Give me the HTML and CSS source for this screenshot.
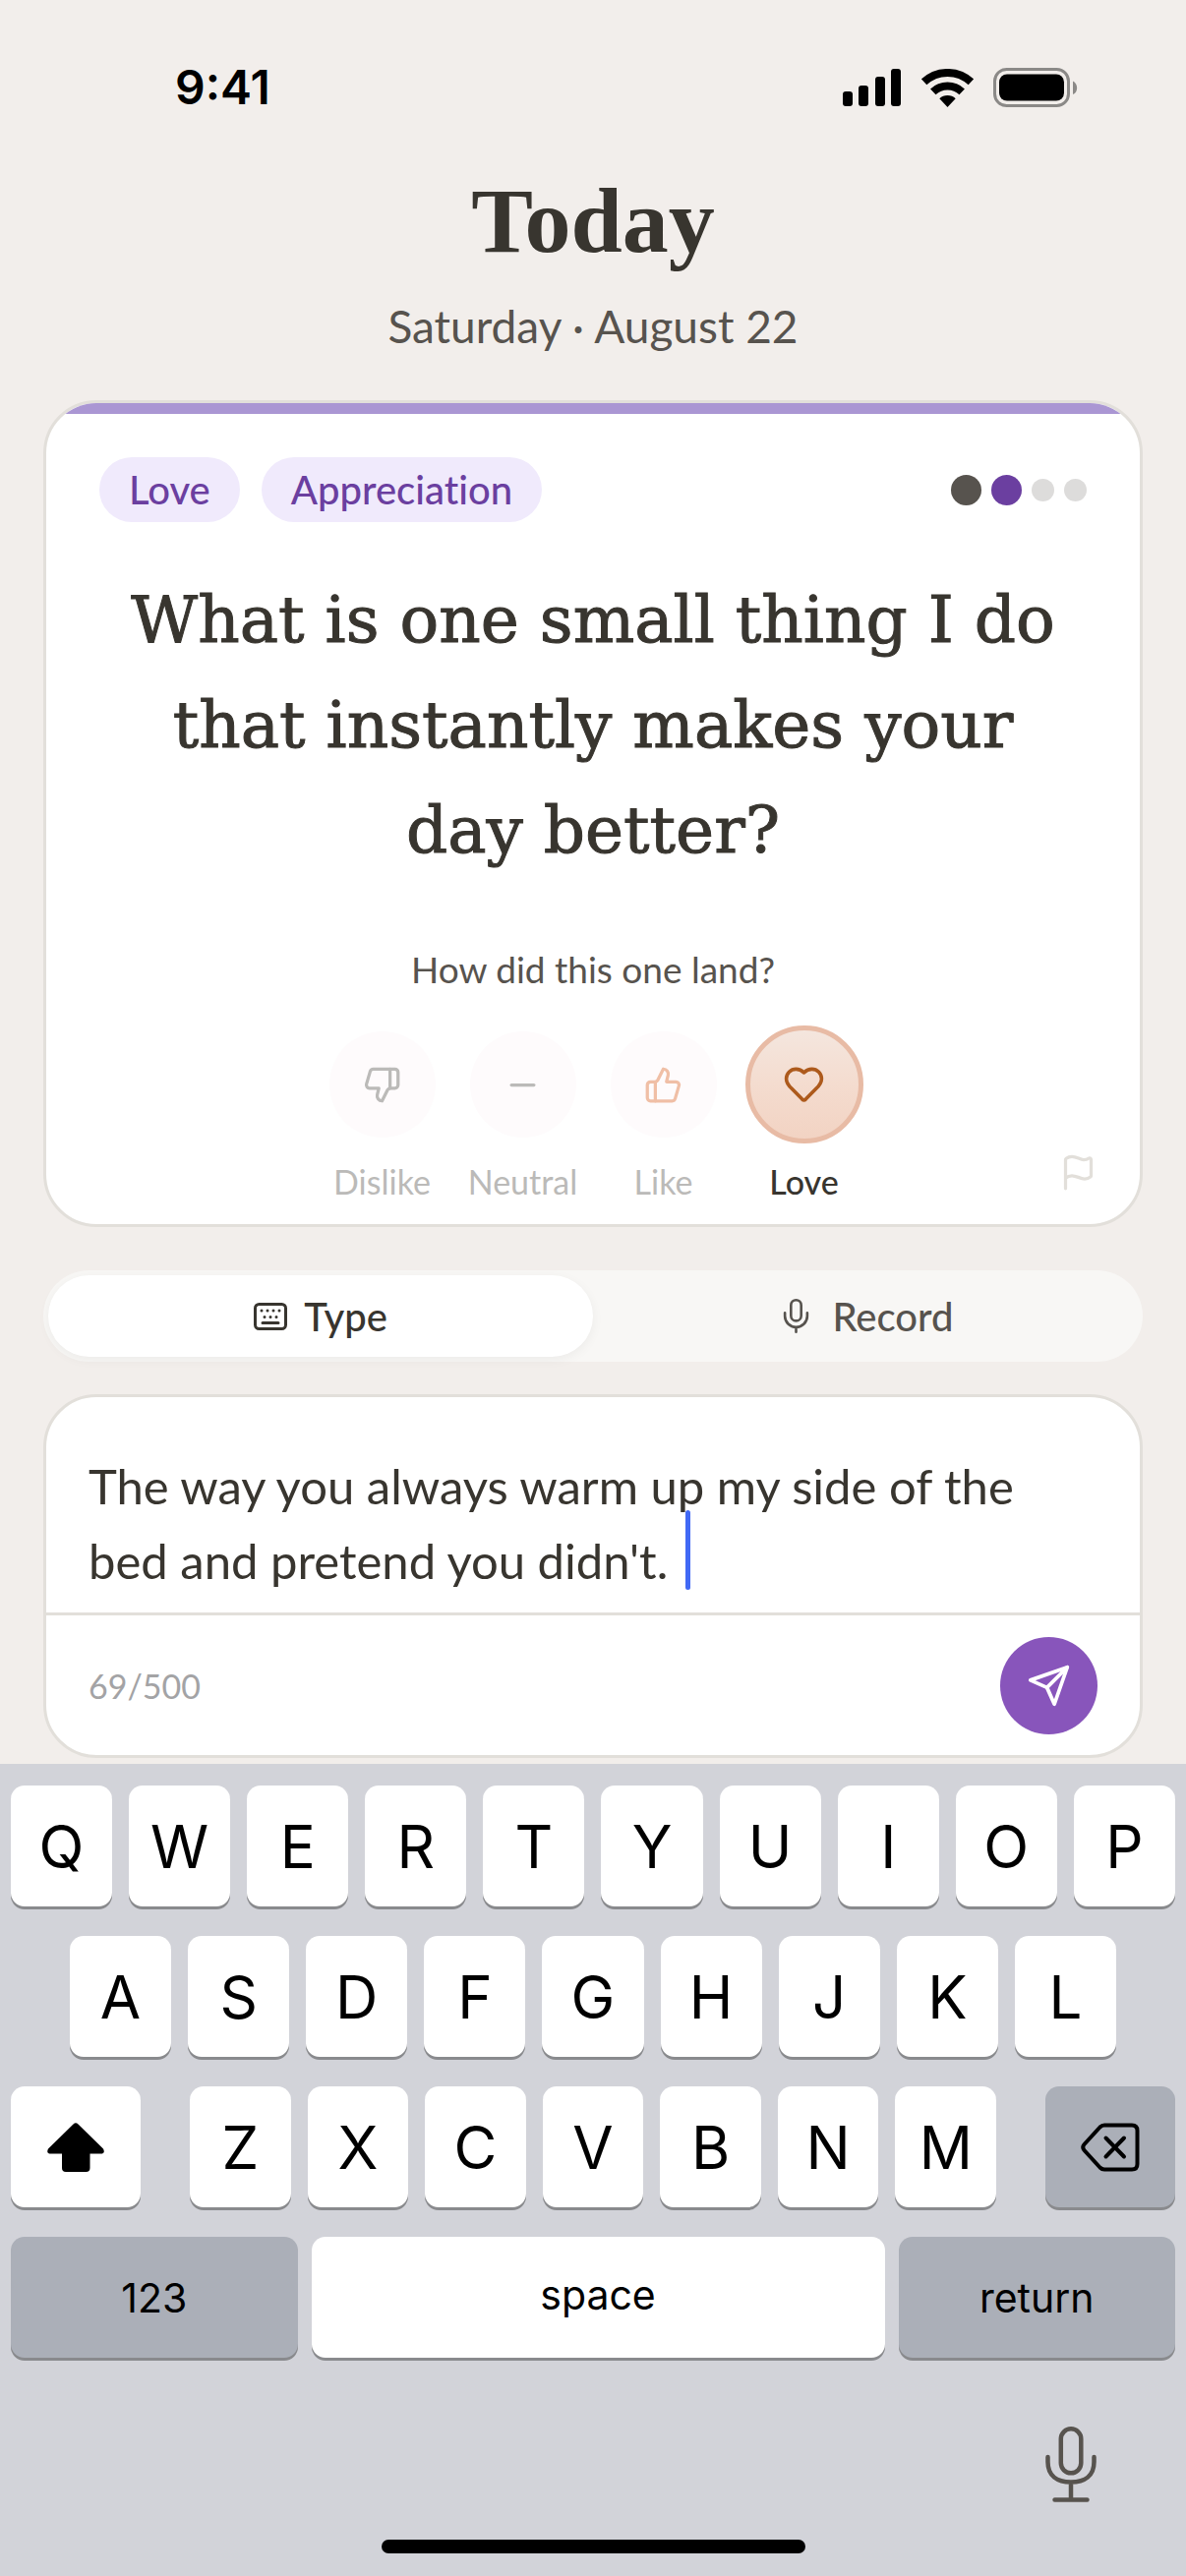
FILE: index.html
```html
<!DOCTYPE html>
<html lang="en">
<head>
    <meta charset="UTF-8">
    <meta name="viewport" content="width=device-width, initial-scale=1.0">
    <title>Today</title>
    <link rel="stylesheet" href="styles.css">
</head>
<body>
    <div class="status-bar">
        <span class="time">9:41</span>
        <div class="status-icons">
            <svg width="60" height="38" viewBox="0 0 60 38">
                <rect x="0" y="23" width="10" height="15" rx="3"/>
                <rect x="16" y="17" width="10" height="21" rx="3"/>
                <rect x="33" y="8" width="10" height="30" rx="3"/>
                <rect x="49" y="0" width="10" height="38" rx="3"/>
            </svg>
            <svg width="53" height="39" viewBox="0 0 53 39">
                <path d="M2.6 13.4A35 35 0 0 1 50.4 13.4" fill="none" stroke="#000" stroke-width="8"/>
                <path d="M11.8 23.3A21.5 21.5 0 0 1 41.2 23.3" fill="none" stroke="#000" stroke-width="8"/>
                <path d="M26.5 39L18.3 30.2A12 12 0 0 1 34.7 30.2Z"/>
            </svg>
            <svg width="86" height="40" viewBox="0 0 86 40">
                <rect x="1.5" y="1.5" width="75" height="37" rx="12" fill="none" stroke="#8b8987" stroke-width="3"/>
                <rect x="6" y="6.5" width="66" height="27" rx="8"/>
                <path d="M81 13.5C86.5 16 86.5 25 81 27Z" fill="#8b8987"/>
            </svg>
        </div>
    </div>

    <header class="page-header">
        <h1>Today</h1>
        <p class="date">Saturday · August 22</p>
    </header>

    <main>
        <section class="card question-card">
            <div class="card-strip"></div>
            <div class="card-body">
                <div class="card-top">
                    <div class="tags">
                        <span class="tag">Love</span>
                        <span class="tag">Appreciation</span>
                    </div>
                    <div class="dots">
                        <span class="dot dot-done"></span>
                        <span class="dot dot-current"></span>
                        <span class="dot"></span>
                        <span class="dot"></span>
                    </div>
                </div>

                <h2>What is one small thing I do that instantly makes your day better?</h2>

                <p class="hint">How did this one land?</p>
                <div class="ratings">
                    <button type="button" class="rating">
                        <span class="rating-circle">
                            <svg class="icon" width="39" height="39" viewBox="0 0 24 24">
                                <path d="M17 14V2"/>
                                <path d="M9 18.12 10 14H4.17a2 2 0 0 1-1.92-2.56l2.33-8A2 2 0 0 1 6.5 2H20a2 2 0 0 1 2 2v8a2 2 0 0 1-2 2h-2.76a2 2 0 0 0-1.79 1.11L12 22a3.13 3.13 0 0 1-3-3.88Z"/>
                            </svg>
                        </span>
                        Dislike
                    </button>
                    <button type="button" class="rating">
                        <span class="rating-circle">
                            <svg class="icon" width="39" height="39" viewBox="0 0 24 24"><path d="M5 12h14"/></svg>
                        </span>
                        Neutral
                    </button>
                    <button type="button" class="rating">
                        <span class="rating-circle like">
                            <svg class="icon" width="39" height="39" viewBox="0 0 24 24">
                                <path d="M7 10v12"/>
                                <path d="M15 5.88 14 10h5.83a2 2 0 0 1 1.92 2.56l-2.33 8A2 2 0 0 1 17.5 22H4a2 2 0 0 1-2-2v-8a2 2 0 0 1 2-2h2.76a2 2 0 0 0 1.79-1.11L12 2a3.13 3.13 0 0 1 3 3.88Z"/>
                            </svg>
                        </span>
                        Like
                    </button>
                    <button type="button" class="rating selected" aria-pressed="true">
                        <span class="rating-circle">
                            <svg class="icon" width="43" height="43" viewBox="0 0 24 24">
                                <path d="M19 14c1.49-1.46 3-3.21 3-5.5A5.5 5.5 0 0 0 16.5 3c-1.76 0-3 .5-4.5 2-1.5-1.5-2.74-2-4.5-2A5.5 5.5 0 0 0 2 8.500c0 2.3 1.5 4.05 3 5.5l5.9 6a1.6 1.6 0 0 0 2.2 0Z"/>
                            </svg>
                        </span>
                        Love
                    </button>
                </div>
            </div>
            <button type="button" class="flag" aria-label="Report question">
                <svg class="icon" width="39" height="39" viewBox="0 0 24 24">
                    <path d="M4 22V4a1 1 0 0 1 .4-.8A6 6 0 0 1 8 2c3 0 5 2 7.333 2q2 0 3.067-.8A1 1 0 0 1 20 4v10a1 1 0 0 1-.4.8A6 6 0 0 1 16 16c-3 0-5-2-8-2a6 6 0 0 0-4 1.528"/>
                </svg>
            </button>
        </section>

        <div class="mode-switch">
            <button type="button" class="mode active">
                <svg width="34" height="28" viewBox="0 0 34 28">
                    <rect x="1.5" y="1.5" width="31" height="25" rx="4" fill="none" stroke="currentColor" stroke-width="3"/>
                    <path d="M8 8h.01M14 8h.01M20 8h.01M26 8h.01M11 14.5h.01M17 14.5h.01M23 14.5h.01M9 20.5h16" fill="none" stroke="currentColor" stroke-width="3" stroke-linecap="round"/>
                </svg>
                Type
            </button>
            <button type="button" class="mode">
                <svg class="icon icon-thin" width="39" height="39" viewBox="0 0 24 24">
                    <rect x="8.8" y="2" width="6.4" height="13" rx="3.2"/>
                    <path d="M19 10v2a7 7 0 0 1-14 0v-2M12 19v3"/>
                </svg>
                Record
            </button>
        </div>

        <section class="card answer-card">
            <div class="answer-field">
                <textarea rows="2" maxlength="500" aria-label="Your answer" spellcheck="false">The way you always warm up my side of the bed and pretend you didn't.</textarea>
                <span class="caret"></span>
            </div>
            <div class="answer-footer">
                <span class="counter">69/500</span>
                <button type="button" class="send" aria-label="Send">
                    <svg class="icon" width="45" height="45" viewBox="0 0 24 24">
                        <path d="m22 2-7 20-4-9-9-4Z"/>
                        <path d="M22 2 11 13"/>
                    </svg>
                </button>
            </div>
        </section>
    </main>

    <div class="keyboard">
        <div class="key-row">
            <button type="button" class="key">Q</button>
            <button type="button" class="key">W</button>
            <button type="button" class="key">E</button>
            <button type="button" class="key">R</button>
            <button type="button" class="key">T</button>
            <button type="button" class="key">Y</button>
            <button type="button" class="key">U</button>
            <button type="button" class="key">I</button>
            <button type="button" class="key">O</button>
            <button type="button" class="key">P</button>
        </div>
        <div class="key-row key-row-inset">
            <button type="button" class="key">A</button>
            <button type="button" class="key">S</button>
            <button type="button" class="key">D</button>
            <button type="button" class="key">F</button>
            <button type="button" class="key">G</button>
            <button type="button" class="key">H</button>
            <button type="button" class="key">J</button>
            <button type="button" class="key">K</button>
            <button type="button" class="key">L</button>
        </div>
        <div class="key-row key-row-shift">
            <button type="button" class="key key-side" aria-label="Shift">
                <svg width="58" height="50" viewBox="0 0 58 50">
                    <path d="M26.5 1.5Q29 -1 31.5 1.5L57 26.5Q59.5 31.5 54 31.5H43.5V46Q43.5 50 39.5 50H19Q15 50 15 46V31.5H4Q-1.5 31.5 1 26.5Z"/>
                </svg>
            </button>
            <div class="key-group">
                <button type="button" class="key">Z</button>
                <button type="button" class="key">X</button>
                <button type="button" class="key">C</button>
                <button type="button" class="key">V</button>
                <button type="button" class="key">B</button>
                <button type="button" class="key">N</button>
                <button type="button" class="key">M</button>
            </div>
            <button type="button" class="key key-side key-dark" aria-label="Delete">
                <svg width="60" height="50" viewBox="0 0 60 50" fill="none" stroke="#000" stroke-width="4" stroke-linecap="round" stroke-linejoin="round">
                    <path d="M24 2.5H52Q57.5 2.5 57.5 8V42Q57.5 47.5 52 47.5H24Q21.5 47.5 19.5 45.5L3.5 28Q1 25 3.5 22L19.5 4.5Q21.5 2.5 24 2.5Z"/>
                    <path d="M25.5 15.5L44 34.5M44 15.5L25.5 34.5"/>
                </svg>
            </button>
        </div>
        <div class="key-row key-row-bottom">
            <button type="button" class="key key-word key-dark">123</button>
            <button type="button" class="key key-word key-space">space</button>
            <button type="button" class="key key-word key-dark">return</button>
        </div>
        <div class="dictation">
            <button type="button" class="mic" aria-label="Dictate">
                <svg width="52" height="77" viewBox="0 0 52 77" fill="none" stroke="#57534e" stroke-width="4.5" stroke-linecap="round">
                    <rect x="15.8" y="2.3" width="20.5" height="45" rx="10.2"/>
                    <path d="M2.5 31V36C2.5 50 12 56.5 26 56.5S49.5 50 49.5 36V31M26 57V74M9.5 74.5H42.5"/>
                </svg>
            </button>
        </div>
        <div class="home-bar"></div>
    </div>
</body>
</html>
```

FILE: styles.css
```css
* {
    box-sizing: border-box;
}

body {
    margin: 0;
    min-height: 100vh;
    display: flex;
    flex-direction: column;
    background: #f2eeeb;
    color: #38352f;
    font-family: Lato, "Liberation Sans", sans-serif;
    font-variant-ligatures: none;
}

h1, h2, p {
    margin: 0;
}

button {
    padding: 0;
    border: none;
    background: none;
    color: inherit;
    font: inherit;
    cursor: pointer;
}

svg {
    display: block;
    flex: none;
}

.icon {
    fill: none;
    stroke: currentColor;
    stroke-width: 2;
    stroke-linecap: round;
    stroke-linejoin: round;
}

.icon-thin {
    stroke-width: 1.6;
}

/* status bar */
.status-bar {
    display: flex;
    align-items: center;
    justify-content: space-between;
    height: 174px;
    padding: 4px 110px 0 178px;
    color: #000;
}

.time {
    font: 600 48px/60px Inter, sans-serif;
}

.status-icons {
    display: flex;
    align-items: center;
    gap: 20px;
}

/* header */
.page-header {
    text-align: center;
}

h1 {
    font: 700 94px/100px "Liberation Serif", serif;
}

.date {
    margin-top: 30px;
    font-size: 46px;
    line-height: 56px;
    color: #57534e;
}

main {
    padding: 47px 44px 6px;
}

.card {
    border: 3px solid #e2dfda;
    border-radius: 54px;
    background: #fff;
    overflow: hidden;
}

/* question */
.question-card {
    position: relative;
}

.card-strip {
    height: 11px;
    background: #aa96d3;
}

.card-body {
    padding: 44px 54px 23px;
}

.card-top {
    display: flex;
    align-items: center;
    justify-content: space-between;
}

.tags {
    display: flex;
    gap: 22px;
}

.tag {
    padding: 0 30px;
    border-radius: 33px;
    background: #f0eafc;
    color: #6b3fa0;
    font-size: 40px;
    font-weight: 500;
    line-height: 66px;
}

.dots {
    display: flex;
    align-items: center;
    gap: 10px;
}

.dot {
    width: 23px;
    height: 23px;
    border-radius: 50%;
    background: #dddcdb;
}

.dot-done,
.dot-current {
    width: 31px;
    height: 31px;
    background: #57534e;
}

.dot-current {
    background: #6b3fa0;
}

h2 {
    margin-top: 46px;
    padding: 0 24px;
    text-align: center;
    font: 400 66px/107px "DejaVu Serif", serif;
    -webkit-text-stroke: 1px #38352f;
}

.hint {
    margin-top: 66px;
    text-align: center;
    font-size: 37px;
    line-height: 44px;
    color: #57534e;
}

.ratings {
    display: flex;
    justify-content: center;
    margin-top: 35px;
}

.rating {
    display: flex;
    flex-direction: column;
    align-items: center;
    width: 143px;
    color: #bbbab8;
    font-size: 34px;
    line-height: 40px;
}

.rating-circle {
    display: flex;
    align-items: center;
    justify-content: center;
    width: 108px;
    height: 108px;
    margin: 6px 0 25px;
    border-radius: 50%;
    background: #fefbfc;
}

.like {
    color: #f0bfa6;
}

.selected {
    color: #38352f;
    font-weight: 500;
}

.selected .rating-circle {
    width: 120px;
    height: 120px;
    margin: 0 0 19px;
    border: 5px solid #e8bba5;
    background: linear-gradient(#f4e6de, #f4dccf 50%, #f2d3c3);
    color: #ad5a1c;
}

.flag {
    position: absolute;
    right: 43px;
    bottom: 33px;
    color: #e2dfda;
}

/* type / record */
.mode-switch {
    display: flex;
    height: 93px;
    margin-top: 44px;
    padding: 5px;
    border-radius: 47px;
    background: #f8f7f5;
}

.mode {
    flex: 1;
    display: flex;
    align-items: center;
    justify-content: center;
    gap: 17px;
    border-radius: 42px;
    color: #57534e;
    font-size: 40px;
    font-weight: 500;
}

.active {
    background: #fff;
    color: #38352f;
    box-shadow: 0 3px 12px rgba(0, 0, 0, 0.05);
}

/* answer */
.answer-card {
    margin-top: 33px;
}

.answer-field {
    position: relative;
    padding: 52px 43px 15px;
    border-bottom: 3px solid #e2dfda;
}

textarea {
    display: block;
    width: 100%;
    padding: 0;
    border: none;
    outline: none;
    resize: none;
    overflow: hidden;
    background: none;
    color: inherit;
    font: 400 49px/76px Lato, "Liberation Sans", sans-serif;
}

.caret {
    position: absolute;
    left: 650px;
    bottom: 23px;
    width: 5px;
    height: 81px;
    border-radius: 3px;
    background: #4169f5;
}

.answer-footer {
    display: flex;
    align-items: center;
    justify-content: space-between;
    height: 142px;
    padding: 0 43px;
}

.counter {
    color: #a3a3a5;
    font-size: 34px;
}

.send {
    display: flex;
    align-items: center;
    justify-content: center;
    width: 99px;
    height: 99px;
    border-radius: 50%;
    background: #8855bb;
    color: #fff;
}

/* keyboard */
.keyboard {
    flex: 1;
    display: flex;
    flex-direction: column;
    gap: 30px;
    padding: 22px 11px;
    background: #d2d3d9;
    color: #000;
}

.key-row,
.key-group {
    display: flex;
    gap: 17px;
}

.key-row-inset {
    padding: 0 60px;
}

.key-row-shift {
    gap: 50px;
}

.key-group {
    flex: 1;
}

.key {
    flex: 1;
    display: flex;
    align-items: center;
    justify-content: center;
    height: 123px;
    border-radius: 14px;
    background: #fff;
    box-shadow: 0 3px 0 #898a8d;
    font: 400 60px/72px Inter, sans-serif;
}

.key-side {
    flex: none;
    width: 132px;
}

.key-dark {
    background: #abafb8;
}

.key-word {
    font-size: 41px;
}

.key-row-bottom {
    display: grid;
    grid-template-columns: 29fr 58fr 28fr;
    gap: 14px;
}

.key-space {
    padding-bottom: 6px;
}

.dictation {
    display: flex;
    justify-content: flex-end;
    margin-top: 40px;
    padding-right: 80px;
}

.home-bar {
    width: 431px;
    height: 14px;
    margin: 8px auto 0;
    border-radius: 7px;
    background: #000;
}
```
